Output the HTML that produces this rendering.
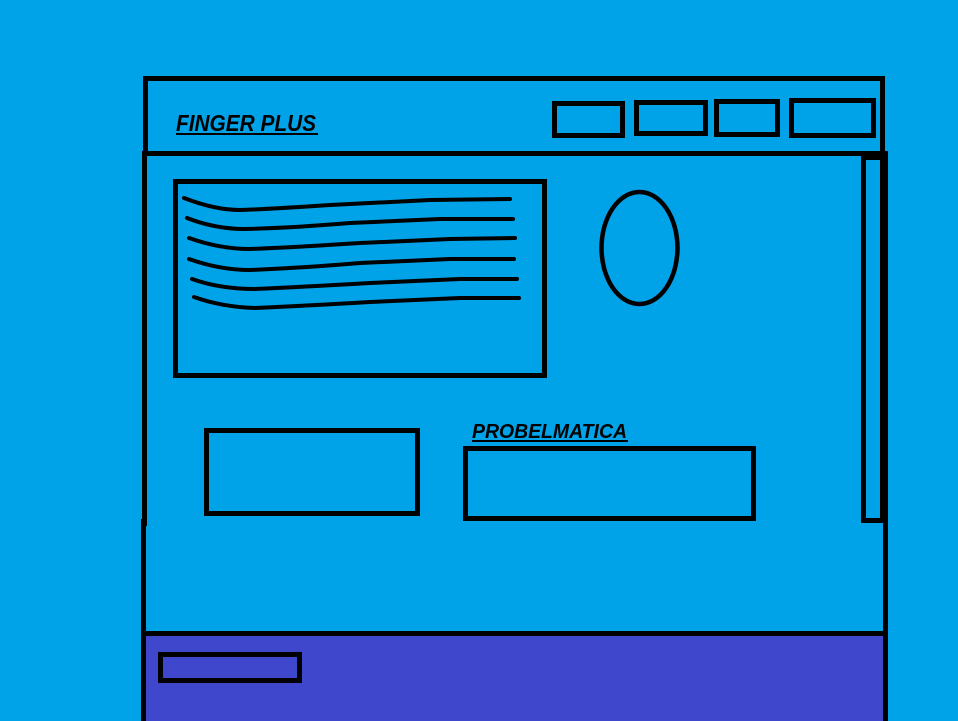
<!DOCTYPE html>
<html><head><style>
html,body{margin:0;padding:0;background:#00A3E8;width:958px;height:721px;overflow:hidden}
svg{display:block}
</style></head><body>
<svg width="958" height="721" viewBox="0 0 958 721" xmlns="http://www.w3.org/2000/svg">
<rect x="0" y="0" width="958" height="721" fill="#00A3E8"/>
<rect x="146" y="634" width="738" height="87" fill="#3F47CC"/>
<g fill="#000">
<rect x="143" y="76" width="742" height="5"/>
<rect x="143" y="76" width="5" height="78"/>
<rect x="880" y="76" width="5" height="78"/>
<rect x="142" y="151" width="746" height="5"/>
<rect x="142" y="151" width="5" height="375"/>
<rect x="141" y="519" width="5" height="202"/>
<rect x="861" y="151" width="5" height="372"/>
<rect x="861" y="151" width="27" height="9"/>
<rect x="861" y="518" width="22" height="5"/>
<rect x="880" y="151" width="8" height="372"/>
<rect x="883" y="520" width="5" height="201"/>
<rect x="141" y="631" width="747" height="5"/>
</g>
<g fill="none" stroke="#000" stroke-width="5">
<rect x="554.5" y="103.5" width="68" height="32"/>
<rect x="636.5" y="102.5" width="69" height="31"/>
<rect x="716.5" y="101.5" width="61" height="33"/>
<rect x="791.5" y="100.5" width="82" height="35"/>
<rect x="175.5" y="181.5" width="369" height="194"/>
<rect x="206.5" y="430.5" width="211" height="83"/>
<rect x="465.5" y="448.5" width="288" height="70"/>
<rect x="160.5" y="654.5" width="139" height="26"/>
</g>
<ellipse cx="639.5" cy="248" rx="38" ry="56" fill="none" stroke="#000" stroke-width="4.5"/>
<g fill="none" stroke="#000" stroke-width="4" stroke-linecap="round">
<path d="M184 198 Q215 210 240 210 Q270 209 330 205 L430 200 L510 199"/>
<path d="M187 218 Q215 229 245 229 Q290 228 350 223 L440 219 L513 219"/>
<path d="M189 238 Q220 249 250 249 Q300 247 360 243 L450 239 L515 238"/>
<path d="M189 259 Q220 270 250 270 Q300 268 360 263 L450 259 L514 259"/>
<path d="M192 279 Q220 289 255 289 Q300 287 370 283 L460 279 L517 279"/>
<path d="M194 297 Q222 307 255 308 Q300 306 370 302 L460 298 L519 298"/>
</g>
<text x="176" y="131" font-family="Liberation Sans, sans-serif" font-size="23" font-weight="bold" font-style="italic" fill="#000" textLength="140" lengthAdjust="spacingAndGlyphs">FINGER PLUS</text>
<rect x="176" y="133" width="142" height="2" fill="#000"/>
<text x="472" y="438" font-family="Liberation Sans, sans-serif" font-size="20" font-weight="bold" font-style="italic" fill="#000" textLength="155" lengthAdjust="spacingAndGlyphs">PROBELMATICA</text>
<rect x="472" y="440" width="156" height="2" fill="#000"/>
</svg>
</body></html>
